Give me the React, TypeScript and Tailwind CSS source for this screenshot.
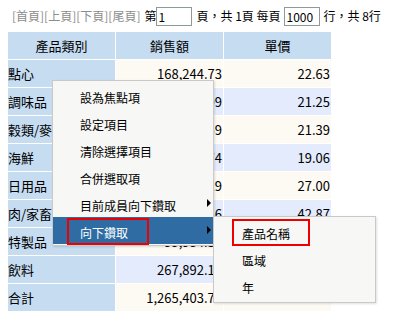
const rows = [
  { name: '點心', sales: '168,244.73', price: '22.63' },
  { name: '調味品', sales: '106,047.09', price: '21.25' },
  { name: '穀類/麥', sales: '95,744.59', price: '21.39' },
  { name: '海鮮', sales: '131,261.74', price: '19.06' },
  { name: '日用品', sales: '234,507.29', price: '27.00' },
  { name: '肉/家畜', sales: '163,022.36', price: '42.87' },
  { name: '特製品', sales: '99,984.58', price: '32.37' },
  { name: '飲料', sales: '267,892.15', price: '37.98' },
  { name: '合計', sales: '1,265,403.77', price: '28.28' },
]

const menu = ['設為焦點項', '設定項目', '清除選擇項目', '合併選取項', '目前成員向下鑽取', '向下鑽取']
const sub = ['產品名稱', '區域', '年']

function Arrow() {
  return <span className="absolute right-[2px] top-[9px] h-0 w-0 border-y-[4px] border-l-[4px] border-y-transparent border-l-black" />
}

export default function App() {
  return (
    <div className="relative h-[319px] w-[410px] overflow-hidden bg-white text-black" style={{ fontFamily: '"Noto Sans CJK TC", "Noto Sans", sans-serif' }}>
      <div className="flex h-[32px] items-center pl-[12px] text-[12px] leading-none">
        <span className="text-[#8c8c8c]">[首頁][上頁][下頁][尾頁]</span>
        <span className="ml-[4px]">第</span>
        <input readOnly value="1" className="h-[19px] w-[36px] border border-[#8e9a9a] px-[1px] text-[12px] outline-none" />
        <span className="ml-[4px]">頁，共 1頁 每頁</span>
        <input readOnly value="1000" className="ml-[3px] h-[19px] w-[36px] border border-[#8e9a9a] px-[2px] text-[12px] outline-none" />
        <span className="ml-[4px]">行，共 8行</span>
      </div>

      <table className="ml-[7px] -mt-[1px] border-separate border-spacing-[1px] text-[13px] leading-none">
        <thead>
          <tr>
            {['產品類別', '銷售額', '單價'].map((h) => (
              <th key={h} className="h-[27px] w-[107px] bg-[#c6dcf1] p-0 text-center font-normal">{h}</th>
            ))}
          </tr>
        </thead>
        <tbody>
          {rows.map((r, i) => {
            const bg = i % 2 === 0 ? 'bg-[#fdf9f3]' : 'bg-[#e3ebfc]'
            return (
              <tr key={r.name}>
                <td className="h-[27px] bg-[#c6dcf1] p-0 text-left">{r.name}</td>
                <td className={`${bg} p-0 pr-[1px] text-right`}>{r.sales}</td>
                <td className={`${bg} p-0 pr-[1px] text-right`}>{r.price}</td>
              </tr>
            )
          })}
        </tbody>
      </table>

      <div className="absolute left-[52px] top-[80px] w-[162px] border border-[#c9c9c9] bg-[#f7f7f5] py-px text-[12px] leading-none shadow-[1px_1px_2px_rgba(0,0,0,0.12)]">
        {menu.map((m, i) => {
          const active = i === 5
          return (
            <div key={m} className={`relative flex h-[27px] items-center pl-[27px] pt-[4px] ${active ? 'bg-[#2e6ca3] text-white' : ''}`}>
              {m}
              {i >= 4 && <Arrow />}
            </div>
          )
        })}
      </div>

      <div className="absolute left-[213px] top-[216px] w-[163px] border border-[#c9c9c9] bg-[#f7f7f5] py-[2px] text-[12px] leading-none shadow-[1px_1px_2px_rgba(0,0,0,0.12)]">
        {sub.map((s) => (
          <div key={s} className="flex h-[27px] items-center pl-[28px] pt-[2px]">{s}</div>
        ))}
      </div>

      <div className="absolute left-[67px] top-[218px] h-[27px] w-[82px] border-2 border-[#ee0000]" />
      <div className="absolute left-[232px] top-[219px] h-[27px] w-[78px] border-2 border-[#ee0000]" />
    </div>
  )
}
